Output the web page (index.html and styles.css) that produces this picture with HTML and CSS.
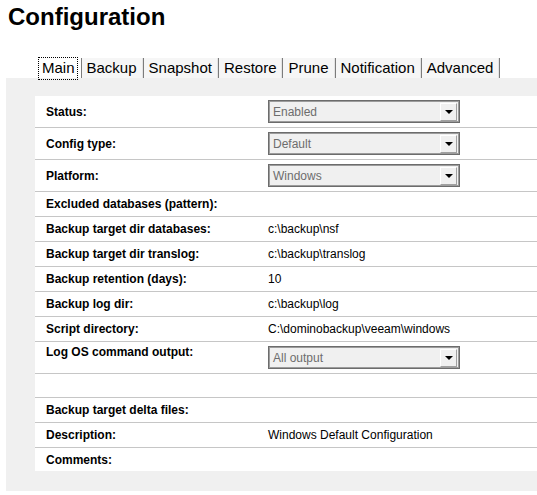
FILE: index.html
```html
<!DOCTYPE html>
<html>
<head>
<meta charset="utf-8">
<link rel="stylesheet" href="styles.css">
</head>
<body>
<h1 class="title">Configuration</h1>
<div class="tabs">
  <div class="tab active"><span class="focus">Main</span></div>
  <div class="tab">Backup</div>
  <div class="tab">Snapshot</div>
  <div class="tab">Restore</div>
  <div class="tab">Prune</div>
  <div class="tab">Notification</div>
  <div class="tab">Advanced</div>
</div>
<div class="panel">
  <div class="form">
    <div class="row sel"><div class="label">Status:</div><div class="value"><div class="select"><span>Enabled</span><span class="btn"><span class="tri"></span></span></div></div></div>
    <div class="row sel"><div class="label">Config type:</div><div class="value"><div class="select"><span>Default</span><span class="btn"><span class="tri"></span></span></div></div></div>
    <div class="row sel"><div class="label">Platform:</div><div class="value"><div class="select"><span>Windows</span><span class="btn"><span class="tri"></span></span></div></div></div>
    <div class="row"><div class="label">Excluded databases (pattern):</div><div class="value"></div></div>
    <div class="row"><div class="label">Backup target dir databases:</div><div class="value">c:\backup\nsf</div></div>
    <div class="row"><div class="label">Backup target dir translog:</div><div class="value">c:\backup\translog</div></div>
    <div class="row"><div class="label">Backup retention (days):</div><div class="value">10</div></div>
    <div class="row"><div class="label">Backup log dir:</div><div class="value">c:\backup\log</div></div>
    <div class="row"><div class="label">Script directory:</div><div class="value">C:\dominobackup\veeam\windows</div></div>
    <div class="row sel"><div class="label top">Log OS command output:</div><div class="value"><div class="select"><span>All output</span><span class="btn"><span class="tri"></span></span></div></div></div>
    <div class="row short"><div class="label"></div><div class="value"></div></div>
    <div class="row"><div class="label">Backup target delta files:</div><div class="value"></div></div>
    <div class="row"><div class="label">Description:</div><div class="value">Windows Default Configuration</div></div>
    <div class="row short last"><div class="label">Comments:</div><div class="value"></div></div>
  </div>
</div>
</body>
</html>
```
FILE: styles.css
```css
html, body {
  margin: 0;
  padding: 0;
  background: #ffffff;
  font-family: "Liberation Sans", Arial, sans-serif;
  color: #000;
  overflow: hidden;
}

.title {
  font-size: 24px;
  font-weight: bold;
  line-height: 28px;
  margin: 3px 0 27px 8px;
}

.tabs {
  display: flex;
  margin-left: 37px;
  height: 20px;
}

.tab {
  font-size: 15px;
  line-height: 20px;
  padding: 0 6px 0 5px;
  border-right: 1px solid #7c7c7c;
  background: #f6f6f6;
  box-shadow: inset -1px 0 0 #e4e4e4;
  color: #000;
}

.tab.active {
  background: #ffffff;
  box-shadow: none;
}

.focus {
  display: inline-block;
  outline: 1px dotted #000;
  outline-offset: 0;
  padding: 0 2px 1px 3px;
  margin: 0 -2px 0 -3px;
  line-height: 20px;
}

.panel {
  margin-left: 6px;
  background: #f0f0f0;
  padding: 18px 0 20px 29px;
}

.form {
  background: #ffffff;
}

.row {
  display: flex;
  align-items: center;
  height: 24px;
  border-bottom: 1px solid #c6c6c6;
  font-size: 12px;
  line-height: 14px;
}

.row.sel { height: 31px; }
.row.short { height: 23px; }
.row.last { border-bottom: none; }

.label {
  width: 222px;
  padding-left: 11px;
  font-weight: bold;
  flex: none;
}

.label.top {
  align-self: flex-start;
  padding-top: 3px;
}

.value {
  flex: 1;
}

.select {
  box-sizing: border-box;
  width: 192px;
  height: 23px;
  border: 1px solid #6c6c6c;
  box-shadow: inset 0 0 0 1px #9c9c9c;
  background: #f0f0f0;
  color: #6d6d6d;
  display: flex;
  align-items: center;
  justify-content: space-between;
  padding: 0 2px 0 4px;
}

.btn {
  box-sizing: border-box;
  width: 17px;
  height: 18px;
  background: #f0f0f0;
  border-top: 1px solid #ffffff;
  border-left: 1px solid #ffffff;
  border-right: 1px solid #a0a0a0;
  border-bottom: 1px solid #a0a0a0;
  display: flex;
  align-items: center;
  justify-content: center;
}

.tri {
  width: 0;
  height: 0;
  border-left: 4px solid transparent;
  border-right: 4px solid transparent;
  border-top: 4px solid #000;
  margin-top: 1px;
}
```
